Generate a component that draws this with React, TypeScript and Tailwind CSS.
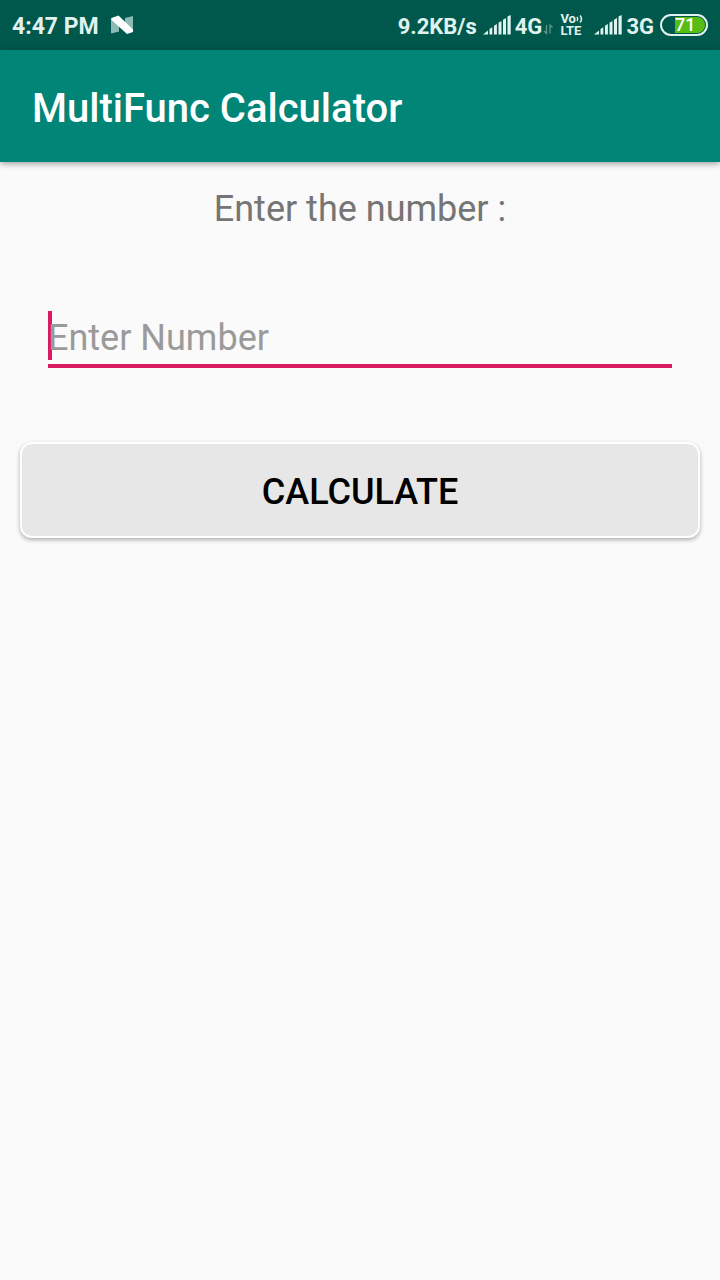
import React from "react";

function Signal() {
  return (
    <svg className="h-5 w-7 shrink-0" viewBox="0 0 28 20" fill="currentColor" aria-hidden="true">
      <path d="M0 19.5 5 15.5V19.5ZM6.5 14 9.3 12.3V19.5H6.5ZM11 10.800 13.900 9V19.5H11ZM15.5 7.800 18.5 6V19.5H15.5ZM20 4.800 23 3V19.5H20ZM24.5 1.5 27.700 0V19.5H24.5Z" />
    </svg>
  );
}

function NougatIcon() {
  return (
    <svg className="h-5 w-6" viewBox="0 0 24 20" aria-hidden="true">
      <path d="M0 3 8 5V16.500L0 18.500ZM14 3 22 1V17L14 15Z" fill="#8dbbb2" />
      <path d="M.5 3 7.500 .5 22 14.500V17L16 19 .5 5Z" fill="#fff" />
    </svg>
  );
}

function DataArrows() {
  return (
    <svg className="h-3 w-3" viewBox="0 0 12 12" fill="none" stroke="#62988e" strokeWidth="1.3" aria-hidden="true">
      <path d="M4.5 2V10.5L2 8M8 10.5V2L10.5 4.5" />
    </svg>
  );
}

function VoLte() {
  return (
    <div className="w-6 text-[13px] leading-3 font-bold">
      <div className="flex items-center">
        <span>Vo</span>
        <svg className="h-2 w-2" viewBox="0 0 8 8" fill="none" stroke="currentColor" strokeWidth="1.5" aria-hidden="true">
          <path d="M1 2Q2.5 4 1 6M4 .5Q7 4 4 7.5" />
        </svg>
      </div>
      <div>LTE</div>
    </div>
  );
}

function Battery() {
  return (
    <div className="flex h-[22px] w-12 rounded-full border-2 border-[#e0f2ef] p-px">
      <div className="ml-3 flex flex-1 items-center rounded-r-full bg-[#55bd13] text-lg leading-4 font-medium text-white">
        71
      </div>
    </div>
  );
}

function StatusBar() {
  return (
    <div className="flex h-[50px] items-center justify-between bg-[#00574b] px-3 text-[#e0f2ef]">
      <div className="flex items-center gap-3 text-[23px] font-bold">
        <span className="pt-1 leading-7">4:47 PM</span>
        <NougatIcon />
      </div>
      <div className="flex items-center text-[22px] leading-7 font-bold">
        <span className="mr-1.5 pt-1">9.2KB/s</span>
        <Signal />
        <span className="ml-1 pt-1">4G</span>
        <div className="mt-2 mr-1.5">
          <DataArrows />
        </div>
        <VoLte />
        <div className="ml-2.5">
          <Signal />
        </div>
        <span className="mr-1.5 ml-1 pt-1">3G</span>
        <Battery />
      </div>
    </div>
  );
}

export default function App() {
  return (
    <div className="min-h-screen bg-[#fafafa] font-['Roboto',sans-serif]">
      <StatusBar />
      <header className="flex h-28 items-center bg-[#008577] px-8 shadow-[0_2px_6px_rgba(0,0,0,0.35)]">
        <h1 className="pt-1.5 text-[40px] leading-12 font-medium text-white">MultiFunc Calculator</h1>
      </header>
      <main className="flex flex-col px-5 pt-[23px]">
        <label htmlFor="number" className="text-center text-4xl leading-12 text-[#757575]">
          Enter the number :
        </label>
        <div className="mx-7 mt-[78px] border-b-4 border-[#d81b60] pb-1">
          <div className="border-l-4 border-[#d81b60]">
            <input
              id="number"
              type="text"
              inputMode="numeric"
              placeholder="Enter Number"
              className="-ml-1 block h-[49px] w-full bg-transparent pt-1 text-4xl text-[#212121] outline-none placeholder:text-[#9a9a9a]"
            />
          </div>
        </div>
        <button
          type="button"
          className="mt-[74px] h-24 rounded-xl border-2 border-white bg-[#e7e7e7] pt-1 text-4xl font-medium text-black shadow-[0_2px_4px_rgba(0,0,0,0.3)]"
        >
          CALCULATE
        </button>
      </main>
    </div>
  );
}
